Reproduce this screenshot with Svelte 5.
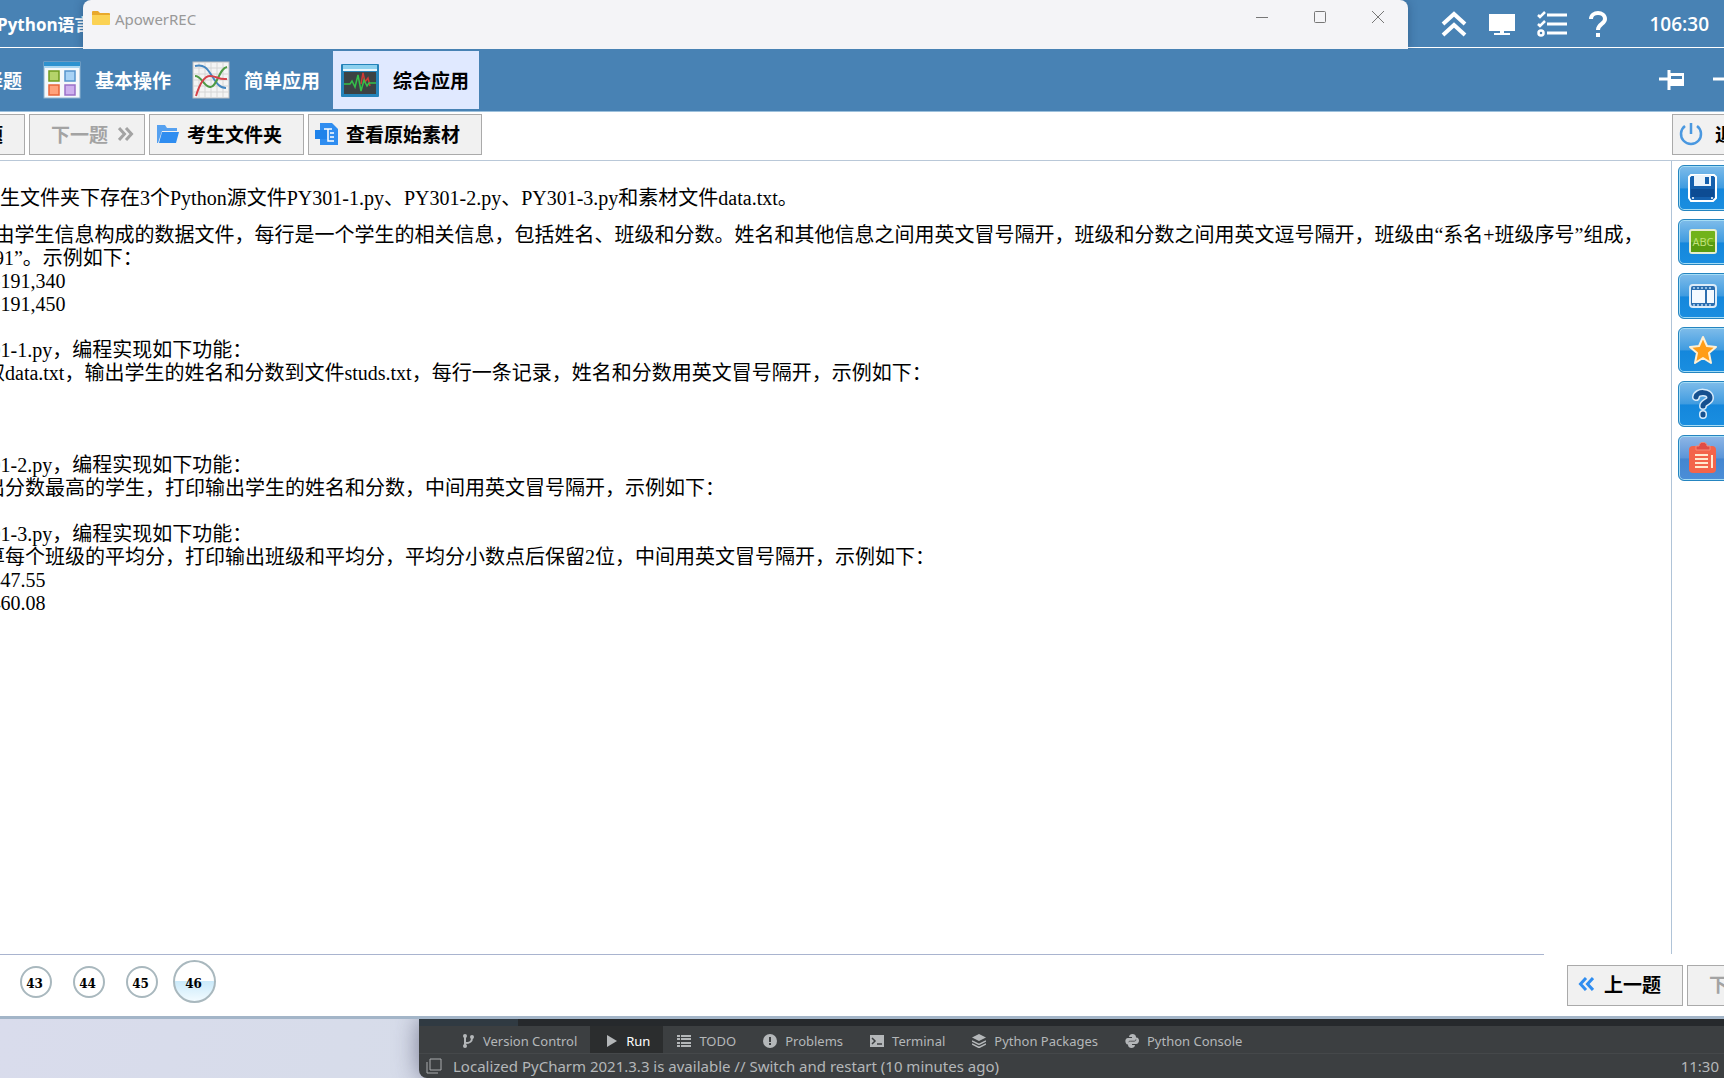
<script>
  const NB = '\u00a0';

  const tabs = [
    { id: 'choice', label: '选择题' },
    { id: 'basic', label: '基本操作' },
    { id: 'simple', label: '简单应用' },
    { id: 'comprehensive', label: '综合应用' },
  ];

  let activeTab = $state('comprehensive');
  let current = $state(46);

  const intro = NB.repeat(9) + '在考生文件夹下存在3个Python源文件PY301-1.py、PY301-2.py、PY301-3.py和素材文件data.txt。';

  const lines = [
    'data.txt是由学生信息构成的数据文件，每行是一个学生的相关信息，包括姓名、班级和分数。姓名和其他信息之间用英文冒号隔开，班级和分数之间用英文逗号隔开，班级由“系名+班级序号”组成，',
    '如“计科191”。示例如下：',
    '王一:计科191,340',
    '李二:计科191,450',
    '',
    '修改PY301-1.py，编程实现如下功能：',
    NB.repeat(10) + '读取data.txt，输出学生的姓名和分数到文件studs.txt，每行一条记录，姓名和分数用英文冒号隔开，示例如下：',
    '',
    '',
    '',
    '修改PY301-2.py，编程实现如下功能：',
    NB.repeat(10) + '找出分数最高的学生，打印输出学生的姓名和分数，中间用英文冒号隔开，示例如下：',
    '',
    '修改PY301-3.py，编程实现如下功能：',
    NB.repeat(10) + '计算每个班级的平均分，打印输出班级和平均分，平均分小数点后保留2位，中间用英文冒号隔开，示例如下：',
    '计科191:447.55',
    '计科192:460.08',
  ];

  const questions = [41, 42, 43, 44, 45, 46];

  const sideTools = [
    { id: 'save', label: '保存' },
    { id: 'board', label: '黑板' },
    { id: 'video', label: '视频' },
    { id: 'star', label: '收藏' },
    { id: 'help', label: '帮助' },
    { id: 'note', label: '笔记' },
  ];

  const ideTabs = [
    { id: 'vcs', label: 'Version Control' },
    { id: 'run', label: 'Run' },
    { id: 'todo', label: 'TODO' },
    { id: 'problems', label: 'Problems' },
    { id: 'terminal', label: 'Terminal' },
    { id: 'packages', label: 'Python Packages' },
    { id: 'console', label: 'Python Console' },
  ];
</script>

{#snippet chevrons(dir)}
  <svg class="chevrons" width="16" height="14" viewBox="0 0 16 14" fill="none" stroke="currentColor" stroke-width="3">
    {#if dir === 'left'}
      <path d="M8 1 2.500 7 8 13M15 1 9.500 7 15 13" />
    {:else}
      <path d="M1 1 6.500 7 1 13M8 1 13.500 7 8 13" />
    {/if}
  </svg>
{/snippet}

{#snippet tabIcon(id)}
  <svg width="38" height="38" viewBox="0 0 38 38">
    {#if id === 'basic'}
      <rect x="1" y="1" width="36" height="36" fill="#f5f8fb" stroke="#8fb4cf" />
      <rect x="1" y="1" width="36" height="6" fill="#2d92cf" />
      <rect x="1" y="5" width="36" height="2" fill="#a9d6f0" />
      <rect x="6" y="10" width="10" height="10" fill="#b5d36a" stroke="#6f9a1e" stroke-width="1.500" />
      <rect x="22" y="10" width="10" height="10" fill="#a8d2f5" stroke="#5794cc" stroke-width="1.500" />
      <rect x="6" y="24" width="10" height="10" fill="#ffa27b" stroke="#e8653a" stroke-width="1.500" />
      <rect x="22" y="24" width="10" height="10" fill="#cdb0ee" stroke="#9a70c8" stroke-width="1.500" />
    {:else if id === 'simple'}
      <rect x="1" y="1" width="36" height="36" fill="#f4f4f4" stroke="#b9bcc0" />
      <path d="M7 1v36M13 1v36M19 1v36M25 1v36M31 1v36M1 7h36M1 13h36M1 19h36M1 25h36M1 31h36" stroke="#d6d6d6" />
      <g fill="none" stroke-width="2">
        <path d="M3 5c9-2 12 2 17 10s8 12 14 12" stroke="#4586c0" />
        <path d="M3 15c7 0 8 10 15 11s9-19 17-20" stroke="#4f9b45" />
        <path d="M4 35c3-10 7-20 14-20s8 4 17 3" stroke="#d5434b" />
      </g>
    {:else if id === 'comprehensive'}
      <rect x="0" y="3" width="38" height="33" rx="1" fill="#2583b9" />
      <rect x="2" y="4" width="34" height="4" fill="#8cd0ee" />
      <rect x="2" y="8" width="34" height="2" fill="#e8f5fb" />
      <rect x="3" y="11" width="32" height="22" fill="#3c4244" />
      <path d="M20 23l2-11 2 9 3-4 2 8" fill="none" stroke="#cf3a35" stroke-width="1.500" />
      <path d="M3 23h6l2-3 3 6 3-12 3 16 3-11 3 6 2-3h7" fill="none" stroke="#34c04a" stroke-width="1.500" />
    {:else}
      <rect x="1" y="1" width="36" height="36" fill="#f5f8fb" stroke="#8fb4cf" />
    {/if}
  </svg>
{/snippet}

{#snippet sideIcon(id)}
  <svg width="32" height="32" viewBox="0 0 32 32">
    {#if id === 'save'}
      <path d="M4 3h23l2 2v21l-3 3H4l-2-3V5z" fill="#1560ad" stroke="#fff" stroke-width="2" />
      <path d="M7 3h17v11H7z" fill="#eaf3fb" />
      <path d="M18 5h4v7h-4z" fill="#1560ad" />
      <path d="M4 17h23v8H4z" fill="#0d4c93" />
      <circle cx="6" cy="26" r="1" fill="#fff" /><circle cx="25" cy="26" r="1" fill="#fff" />
    {:else if id === 'board'}
      <rect x="3" y="4" width="26" height="23" rx="2" fill="#72b31b" stroke="#e6edcf" stroke-width="2" />
      <path d="M4 16h24v10H4z" fill="#589c10" />
      <text x="16" y="20" text-anchor="middle" font-family="Open Sans, sans-serif" font-size="11" fill="#c4e37f">ABC</text>
    {:else if id === 'video'}
      <rect x="3" y="5" width="26" height="22" rx="3" fill="#2c6fb0" stroke="#dcecf9" stroke-width="2" />
      <path d="M5 10h13v13H5zM20 10h7v13h-7z" fill="#f4faff" />
      <path d="M6 8h20M6 25h20" stroke="#b4d7f3" stroke-width="1.500" stroke-dasharray="2 2" />
    {:else if id === 'star'}
      <path d="M16 3l4 9 9 1-7 6 2 10-8-5-8 5 2-10-7-6 9-1z" fill="#ff9d17" stroke="#fff0d3" stroke-width="2" stroke-linejoin="round" />
    {:else if id === 'help'}
      <g fill="none" stroke-linecap="round">
        <path d="M9 9c1-6 14-6 14 1 0 4-7 4-7 8M16 26v1" stroke="#d5eafa" stroke-width="8" />
        <path d="M9 9c1-6 14-6 14 1 0 4-7 4-7 8M16 26v1" stroke="#15508f" stroke-width="5" />
      </g>
    {:else}
      <rect x="2" y="4" width="27" height="27" rx="4" fill="#f3644a" />
      <path d="M9 4h3c0-5 8-5 8 0h3v4H9z" fill="#e14d46" stroke="#f58c78" />
      <path d="M8 13h13M8 17h13M8 21h13M8 25h13" stroke="#ffe9cf" stroke-width="2" />
      <path d="M25 13v13" stroke="#ffe9cf" stroke-width="2" />
    {/if}
  </svg>
{/snippet}

{#snippet ideIcon(id)}
  <svg width="14" height="14" viewBox="0 0 14 14" fill="currentColor">
    {#if id === 'vcs'}
      <path d="M4 2v10M4 9c5 0 7-1 7-5" fill="none" stroke="currentColor" stroke-width="2" />
      <circle cx="4" cy="2" r="2" /><circle cx="4" cy="12" r="2" /><circle cx="11" cy="3" r="2" />
    {:else if id === 'run'}
      <path d="M3 1l10 6-10 6z" />
    {:else if id === 'todo'}
      <path d="M0 1h3v2H0zM4 1h10v2H4zM0 4h3v2H0zM4 4h10v2H4zM0 8h3v2H0zM4 8h10v2H4zM0 11h3v2H0zM4 11h10v2H4z" />
    {:else if id === 'problems'}
      <circle cx="7" cy="7" r="7" />
      <path d="M6 3h2v5H6zM6 9h2v2H6z" fill="#3c3f41" />
    {:else if id === 'terminal'}
      <path d="M0 1h14v12H0z" />
      <path d="M2 4l3 3-3 3M7 10h5" fill="none" stroke="#3c3f41" stroke-width="1.500" />
    {:else if id === 'packages'}
      <path d="M7 0l7 3.500L7 7 0 3.500z" />
      <path d="M0 7l7 3.500L14 7M0 10l7 3.500L14 10" fill="none" stroke="currentColor" stroke-width="1.500" />
    {:else}
      <path d="M4 3c0-4 7-4 7 0v3c0 1-1 1.500-2 1.500H5C3.500 7.500 3 8.500 3 10.500 0 11-1 4 3 4h4V3z" />
      <path d="M10 11c0 4-7 4-7 0V8.500C3 7.500 4 7 5 7h4c1.500 0 2-1 2-3.500 4-.5 4 6.500 0 6.500H7v1z" />
      <path d="M3.500 8.200c.5-.9 1-1 2-1h3.500c1.300 0 1.900-.6 1.900-1.800" fill="none" stroke="#3c3f41" stroke-width=".8" />
    {/if}
  </svg>
{/snippet}

<main class="screen">
  <section class="exam">
    <header class="topbar">
      <h1>全国二级Python语言程序设计</h1>
      <div class="top-actions">
        <button class="bare" type="button" aria-label="收起">
          <svg width="26" height="26" viewBox="0 0 26 26" fill="none" stroke="#fff" stroke-width="4">
            <path d="M2 13 13 3l11 10M2 24 13 14l11 10" />
          </svg>
        </button>
        <button class="bare" type="button" aria-label="屏幕">
          <svg width="26" height="26" viewBox="0 0 26 26" fill="#fff">
            <path d="M0 3h26v17H0zM11 20h4v2h-4zM5 22h16v2H5z" />
          </svg>
        </button>
        <button class="bare" type="button" aria-label="答题列表">
          <svg width="30" height="26" viewBox="0 0 30 26" fill="none" stroke="#fff" stroke-width="3">
            <path d="M10 4h20M10 13h20M10 22h20" />
            <path d="M1 4l2 2 5-5M1 13l2 2 5-5" stroke-width="2.500" />
            <circle cx="4" cy="22" r="2.500" stroke-width="2.500" />
          </svg>
        </button>
        <button class="bare" type="button" aria-label="帮助">
          <svg width="18" height="26" viewBox="0 0 18 26" fill="none" stroke="#fff" stroke-width="4">
            <path d="M2 8c0-8 14-8 14 0 0 5-7 5-7 11M9 22v4" />
          </svg>
        </button>
        <time>106:30</time>
      </div>
    </header>

    <nav class="tabs">
      {#each tabs as tab (tab.id)}
        <button type="button" class="tab" class:active={activeTab === tab.id} onclick={() => (activeTab = tab.id)}>
          {@render tabIcon(tab.id)}
          <span>{tab.label}</span>
        </button>
      {/each}
      <div class="tab-actions">
        <button class="bare" type="button" aria-label="固定">
          <svg width="26" height="22" viewBox="0 0 26 22">
            <path d="M0 10h9M10 1v20" fill="none" stroke="#fff" stroke-width="3" />
            <path d="M11 4h14v13H11z" fill="#fff" />
            <path d="M12 7h11v3H12z" fill="#4882b4" />
          </svg>
        </button>
        <button class="bare" type="button" aria-label="最小化">
          <svg width="22" height="22" viewBox="0 0 22 22"><path d="M0 10h22" stroke="#fff" stroke-width="3" /></svg>
        </button>
      </div>
    </nav>

    <div class="toolbar">
      <button type="button" class="btn step">
        {@render chevrons('left')}
        <span>上一题</span>
      </button>
      <button type="button" class="btn step next" disabled>
        <span>下一题</span>
        {@render chevrons('right')}
      </button>
      <button type="button" class="btn">
        <svg width="24" height="24" viewBox="0 0 24 24" fill="#2f8df0">
          <path d="M1 3h8l2 3h10v3H6L2 21H1z" opacity=".8" />
          <path d="M6 10h17l-3 11H3z" />
        </svg>
        <span>考生文件夹</span>
      </button>
      <button type="button" class="btn">
        <svg width="24" height="24" viewBox="0 0 24 24">
          <path d="M5 1h12l6 6v16H5z" fill="#2f8df0" />
          <path d="M0 8h12v9H0z" fill="#1f83ea" />
          <path d="M9 7h8M13 7v12h6M15 11h4M15 15h4" fill="none" stroke="#fff" stroke-width="1.500" />
        </svg>
        <span>查看原始素材</span>
      </button>
      <button type="button" class="btn exit">
        <svg width="24" height="24" viewBox="0 0 24 24" fill="none" stroke="#4a98e0" stroke-width="2.500">
          <path d="M6 4a10 10 0 1 0 12 0M12 1v11" />
        </svg>
        <span>退出</span>
      </button>
    </div>

    <div class="body">
      <article class="sheet">
        <p>{intro}</p>
        <p>
          {#each lines as line}
            {line}<br />
          {/each}
        </p>
      </article>
      <aside class="side">
        {#each sideTools as tool (tool.id)}
          <button type="button" class="side-btn" class:muted={tool.id === 'note'}>
            {@render sideIcon(tool.id)}
            <span>{tool.label}</span>
          </button>
        {/each}
      </aside>
    </div>

    <footer class="footer">
      <div class="pager">
        {#each questions as q (q)}
          <div class="cell">
            <button type="button" class="dot" class:current={q === current} onclick={() => (current = q)}>{q}</button>
          </div>
        {/each}
      </div>
      <div class="pager-nav">
        <button type="button" class="btn step">
          {@render chevrons('left')}
          <span>上一题</span>
        </button>
        <button type="button" class="btn step next" disabled>
          <span>下一题</span>
          {@render chevrons('right')}
        </button>
      </div>
    </footer>
  </section>

  <section class="desktop">
    <div class="ide">
      <div class="ide-console"></div>
      <div class="ide-tabs">
        {#each ideTabs as tab (tab.id)}
          <button type="button" class="ide-tab" class:running={tab.id === 'run'}>
            {@render ideIcon(tab.id)}
            <span>{tab.label}</span>
          </button>
        {/each}
      </div>
      <div class="ide-status">
        <svg width="16" height="16" viewBox="0 0 16 16" fill="none" stroke="#a9acae">
          <path d="M4 1h11v11H4zM1 4v11h11" />
        </svg>
        <span>Localized PyCharm 2021.3.3 is available // Switch and restart (10 minutes ago)</span>
        <time>11:30</time>
      </div>
    </div>
  </section>

  <!-- recorder window lying over the exam header -->
  <div class="recorder">
    <svg width="20" height="16" viewBox="0 0 20 16">
      <path d="M1 2q0-1 1-1h5l2 2h9q1 0 1 1v10H1z" fill="#e9a92c" />
      <path d="M1 5h18v9q0 1-1 1H2q-1 0-1-1z" fill="#fbd254" />
    </svg>
    <span>ApowerREC</span>
    <div class="recorder-controls">
      <button class="bare" type="button" aria-label="Minimize">
        <svg width="14" height="14" viewBox="0 0 14 14" stroke="#777"><path d="M1 7.500h12" /></svg>
      </button>
      <button class="bare" type="button" aria-label="Maximize">
        <svg width="14" height="14" viewBox="0 0 14 14" fill="none" stroke="#777"><rect x="1.500" y="1.500" width="11" height="11" rx="1" /></svg>
      </button>
      <button class="bare" type="button" aria-label="Close">
        <svg width="14" height="14" viewBox="0 0 14 14" stroke="#777"><path d="M1 1l12 12M13 1 1 13" /></svg>
      </button>
    </div>
  </div>
</main>

<style>
  :global(body) {
    background: #fff;
  }

  .screen {
    position: relative;
    display: flex;
    flex-direction: column;
    min-height: 100vh;
    overflow: hidden;
    font-family: 'Open Sans', 'Noto Sans CJK SC', sans-serif;
  }

  button {
    font: inherit;
    cursor: pointer;
    white-space: nowrap;
  }

  svg {
    flex: none;
    display: block;
  }

  .bare {
    padding: 0;
    border: 0;
    background: none;
  }

  /* the exam window is wider than the screen and hangs over both edges */
  .exam {
    flex: 1;
    display: flex;
    flex-direction: column;
    margin: 0 -60px 0 -97px;
    background: #fff;
    border-bottom: 3px solid #a3b5c8;
  }

  .topbar {
    display: flex;
    align-items: center;
    justify-content: space-between;
    height: 47px;
    padding: 0 75px 0 26px;
    background: #4882b4;
    border-bottom: 1px solid #fff;
    color: #fff;
  }

  h1 {
    margin: 0;
    font-size: 17px;
    font-weight: 700;
  }

  .top-actions {
    display: flex;
    align-items: center;
    gap: 22px;
  }

  .top-actions time {
    margin-left: 20px;
    font-size: 19px;
    font-weight: 600;
  }

  .tabs {
    display: flex;
    align-items: center;
    gap: 3px;
    height: 63px;
    padding-left: 2px;
    background: #4882b4;
    border-bottom: 1px solid #9cc0dc;
  }

  .tab {
    display: flex;
    align-items: center;
    gap: 14px;
    height: 58px;
    padding: 0 10px 0 8px;
    border: 0;
    background: none;
    color: #fff;
    font-size: 19px;
    font-weight: 700;
  }

  .tab.active {
    background: #e0e9ff;
    color: #000;
  }

  .tab-actions {
    display: flex;
    gap: 28px;
    margin-left: auto;
    padding-right: 49px;
  }

  .toolbar {
    display: flex;
    align-items: flex-start;
    gap: 4px;
    height: 46px;
    padding: 2px 12px 0 6px;
    border-bottom: 1px solid #b9c8d8;
  }

  .btn {
    display: flex;
    flex: none;
    align-items: center;
    gap: 7px;
    box-sizing: border-box;
    height: 41px;
    padding: 0 21px 2px 6px;
    border: 1px solid #aaa;
    background: #f1f1f1;
    color: #000;
    font-size: 19px;
    font-weight: 700;
  }

  .step {
    gap: 10px;
    width: 116px;
    padding: 0 10px 2px;
  }

  .step.next {
    justify-content: flex-end;
  }

  .step .chevrons {
    color: #2f8df0;
  }

  .btn:disabled,
  .btn:disabled .chevrons {
    color: #a3a3a3;
  }

  .exit {
    width: 100px;
    gap: 12px;
    margin-left: auto;
  }

  .body {
    flex: 1;
    display: flex;
  }

  .sheet {
    flex: 1;
    min-width: 0;
    padding: 26px 0 24px 12px;
    overflow: hidden;
    border-bottom: 1px solid #a9b4cf;
    font-family: 'Liberation Serif', 'Noto Sans CJK SC', serif;
    font-size: 20px;
    line-height: 23px;
    white-space: nowrap;
  }

  .sheet p {
    margin: 0 0 14px;
  }

  .side {
    display: flex;
    flex-direction: column;
    gap: 8px;
    width: 106px;
    padding: 4px 0 0 6px;
    border-left: 1px solid #b0c4d8;
  }

  .side-btn {
    display: flex;
    align-items: center;
    gap: 6px;
    box-sizing: border-box;
    width: 90px;
    height: 46px;
    padding: 0 8px;
    border: 1px solid #2585c0;
    border-radius: 6px;
    background: linear-gradient(#7fbcea, #3f9be0 50%, #1487dc 52%, #1a8ee0);
    box-shadow: inset 0 0 0 1px #a5dcf5;
    color: #fff;
    font-size: 14px;
  }

  .side-btn.muted {
    background: linear-gradient(#8fb6e6, #5b95d8 50%, #4486d0 52%, #4b8ed8);
  }

  .footer {
    display: flex;
    justify-content: space-between;
    height: 61px;
  }

  .pager {
    display: flex;
    align-items: center;
    padding-bottom: 8px;
  }

  .cell {
    display: flex;
    justify-content: center;
    width: 53px;
  }

  .dot {
    box-sizing: border-box;
    width: 32px;
    height: 32px;
    padding: 4px 2px 0 0;
    border: 2px solid #a9b8be;
    border-radius: 50%;
    background: #fff;
    font-family: 'DejaVu Serif', serif;
    font-size: 12px;
    font-weight: 700;
    color: #000;
  }

  .dot.current {
    width: 43px;
    height: 43px;
    background: linear-gradient(#fff 48%, #cbeafa 50%, #f2fbff);
  }

  /* covers the sheet's bottom line above the two buttons */
  .pager-nav {
    display: flex;
    align-items: center;
    gap: 4px;
    width: 217px;
    margin-top: -1px;
    padding-left: 23px;
    background: #fff;
  }

  .desktop {
    display: flex;
    height: 59px;
    overflow: hidden;
    background: linear-gradient(100deg, #d9dcec, #d6dce9 30%, #dcdeee);
  }

  .ide {
    flex: 1;
    display: flex;
    flex-direction: column;
    margin-left: 419px;
    overflow: hidden;
    border-bottom-left-radius: 8px;
    background: #3c3f41;
    box-shadow: 0 0 24px rgba(60, 60, 90, 0.6);
    color: #b4b7b9;
    font-family: 'Noto Sans', sans-serif;
  }

  .ide-console {
    height: 7px;
    background: linear-gradient(90deg, #303a42 99px, #26292c 99px);
  }

  .ide-tabs {
    display: flex;
    height: 27px;
    padding-left: 28px;
    border-bottom: 1px solid #45484a;
  }

  .ide-tab {
    display: flex;
    align-items: center;
    gap: 8px;
    padding: 3px 13px 0 14px;
    border: 0;
    background: none;
    color: inherit;
    font-size: 13px;
  }

  .ide-tab.running {
    background: #2b2d2e;
  }

  .ide-tab.running span {
    color: #fff;
  }

  .ide-status {
    display: flex;
    align-items: center;
    gap: 11px;
    flex: 1;
    padding: 0 5px 0 7px;
    font-size: 15px;
    line-height: 20px;
  }

  .ide-status time {
    margin-left: auto;
  }

  .recorder {
    position: absolute;
    top: 0;
    left: 83px;
    right: 316px;
    display: flex;
    align-items: flex-start;
    gap: 4px;
    box-sizing: border-box;
    height: 49px;
    padding: 10px 23px 0 8px;
    border-radius: 8px 8px 0 0;
    background: #f4f4f7;
    box-shadow: 0 0 10px rgba(20, 50, 90, 0.4);
    clip-path: inset(0 -12px 0 -12px);
    color: #999;
    font-family: 'Noto Sans', sans-serif;
    font-size: 15px;
    line-height: 18px;
  }

  .recorder-controls {
    display: flex;
    gap: 44px;
    margin-left: auto;
  }
</style>
